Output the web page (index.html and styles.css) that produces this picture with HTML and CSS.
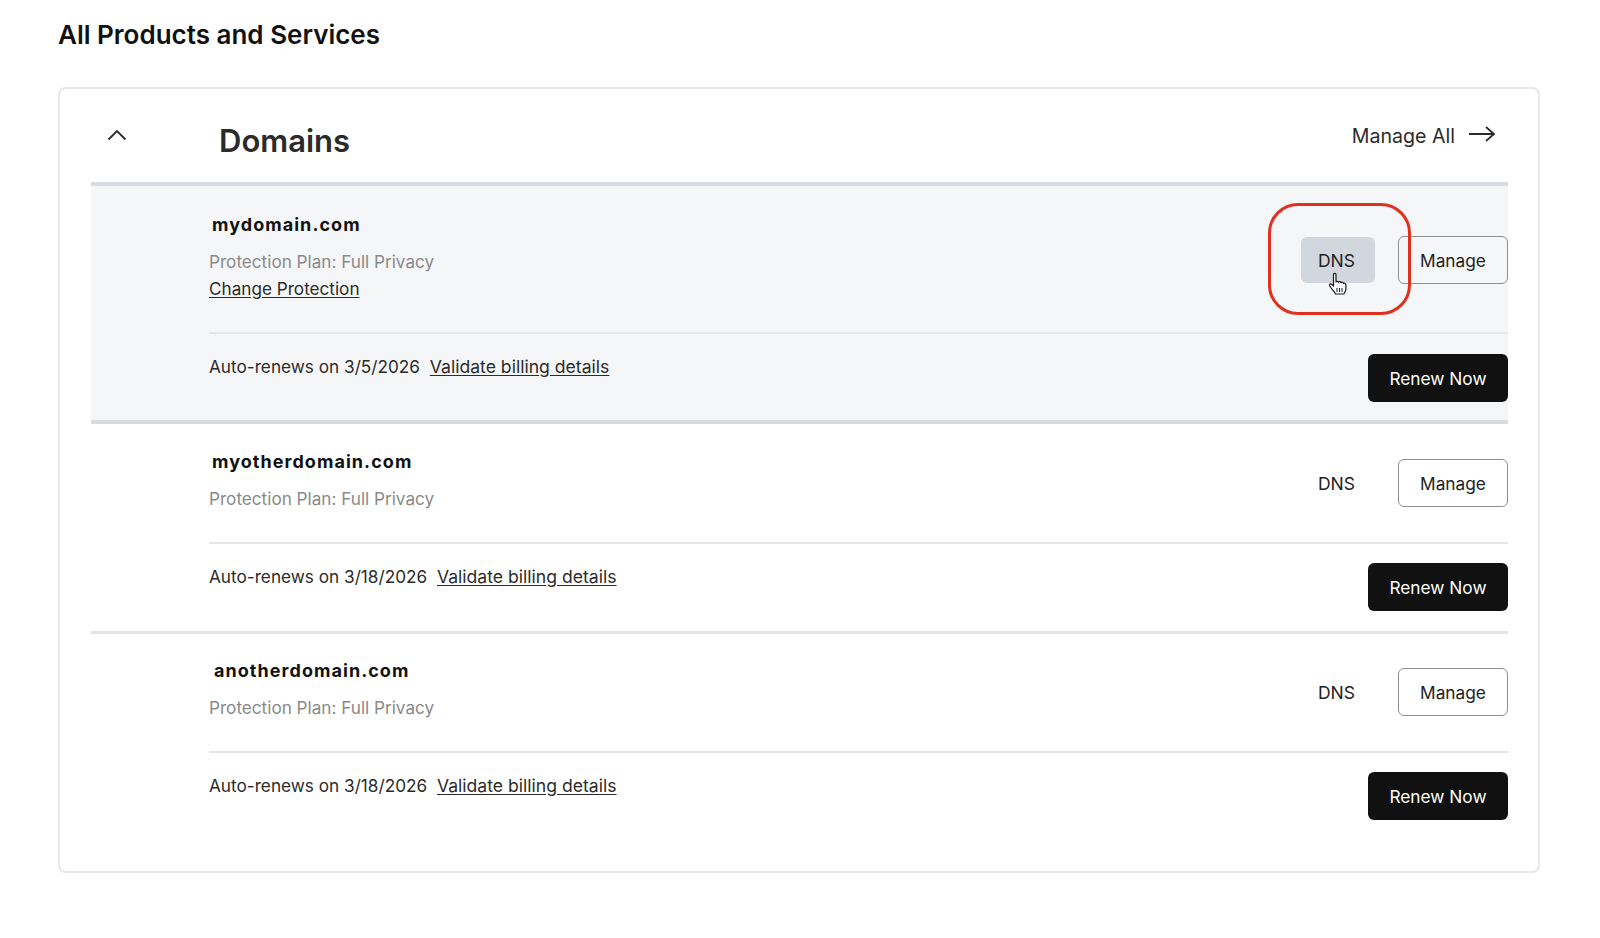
FILE: index.html
```html
<!DOCTYPE html>
<html lang="en">
<head>
<meta charset="utf-8">
<title>All Products and Services</title>
<link rel="stylesheet" href="styles.css">
</head>
<body>
<main class="page">
  <h1 class="title">All Products and Services</h1>
  <section class="card">
    <header class="card-head">
      <svg class="chevron" width="20" height="12" viewBox="0 0 20 12"><path d="M1.5 10.5 10 2l8.500 8.500" fill="none" stroke="#2b2b2b" stroke-width="1.800"/></svg>
      <h2 class="card-title">Domains</h2>
      <a class="manage-all">Manage All
        <svg class="arrow" width="28" height="18" viewBox="0 0 28 18"><path d="M1 9h25M18 2l8 7-8 7" fill="none" stroke="#2b2b2b" stroke-width="1.800"/></svg>
      </a>
    </header>

    <article class="domain domain-active">
      <div class="domain-top domain-top-tall">
        <div class="domain-info">
          <div class="domain-name">mydomain.com</div>
          <div class="plan">Protection Plan: Full Privacy</div>
          <a class="link change">Change Protection</a>
        </div>
        <div class="actions">
          <span class="dns dns-hover">DNS
            <svg class="cursor" width="20" height="24" viewBox="0 0 20 24"><path d="M5.500 2.500c0-1.500 2.500-1.500 2.500 0V10c0-1 2.500-1 2.500.3 0-1 2.500-1 2.500.4 .3-.9 2.500-.6 2.500.8 .2-.7 2.400-.4 2.400 1V17c0 2-1.400 3.500-2 5H7.500C6.500 19.500 4 18 1.800 14c-.9-1.700 1-2.900 2.200-1.500l1.500 1.500z" fill="#fff" stroke="#1a1a1a" stroke-width="1.200" stroke-linejoin="round"/><path d="M9 16v4M11.500 16v4M14 16v4" stroke="#1a1a1a"/></svg>
          </span>
          <a class="btn btn-outline">Manage</a>
        </div>
        <div class="callout"></div>
      </div>
      <div class="domain-bottom">
        <div class="renew-text">Auto-renews on 3/5/2026 <a class="link">Validate billing details</a></div>
        <a class="btn btn-dark">Renew Now</a>
      </div>
    </article>

    <article class="domain">
      <div class="domain-top">
        <div class="domain-info">
          <div class="domain-name">myotherdomain.com</div>
          <div class="plan">Protection Plan: Full Privacy</div>
        </div>
        <div class="actions">
          <span class="dns">DNS</span>
          <a class="btn btn-outline">Manage</a>
        </div>
      </div>
      <div class="domain-bottom">
        <div class="renew-text">Auto-renews on 3/18/2026 <a class="link">Validate billing details</a></div>
        <a class="btn btn-dark">Renew Now</a>
      </div>
    </article>

    <article class="domain domain-last">
      <div class="domain-top">
        <div class="domain-info">
          <div class="domain-name domain-name-shift">anotherdomain.com</div>
          <div class="plan">Protection Plan: Full Privacy</div>
        </div>
        <div class="actions">
          <span class="dns">DNS</span>
          <a class="btn btn-outline">Manage</a>
        </div>
      </div>
      <div class="domain-bottom">
        <div class="renew-text">Auto-renews on 3/18/2026 <a class="link">Validate billing details</a></div>
        <a class="btn btn-dark">Renew Now</a>
      </div>
    </article>
  </section>
</main>
</body>
</html>
```

FILE: styles.css
```css
* { box-sizing: border-box; }
html, body { margin: 0; background: #fff; }
body {
  font-family: "Inter", "Liberation Sans", sans-serif;
  color: #1f1f1f;
  font-size: 18px;
}
.page { padding: 16px 60px 0 58px; }
.title {
  margin: 0;
  font-size: 26px;
  line-height: 38px;
  font-weight: 600;
  color: #111;
}
.card {
  margin-top: 33px;
  width: 1482px;
  height: 786px;
  border: 2px solid #e6e8eb;
  border-radius: 8px;
  padding: 0 30px 0 31px;
  background: #fff;
}
.card-head {
  height: 97px;
  display: flex;
  align-items: flex-start;
  border-bottom: 4px solid #d8dce2;
}
.chevron { margin: 40px 0 0 16px; flex: none; }
.card-title {
  margin: 30px 0 0 92px;
  font-size: 31px;
  line-height: 44px;
  font-weight: 600;
  color: #2b2b2b;
}
.manage-all {
  margin: 32px 12px 0 auto;
  display: flex;
  align-items: center;
  gap: 13px;
  font-size: 19.600px;
  line-height: 30px;
  color: #2b2b2b;
}
.arrow { margin-top: -4px; }
.domain {
  padding-left: 118px;
  border-bottom: 3px solid #e2e4e8;
}
.domain-active {
  background: #f5f6f8;
  border-bottom: 4px solid #d8dce2;
}
.domain-last { border-bottom: 0; }
.domain-top {
  position: relative;
  height: 120px;
  display: flex;
  justify-content: space-between;
  align-items: flex-start;
  padding-top: 26px;
  border-bottom: 2px solid #e4e6e9;
}
.domain-top-tall { height: 148px; padding-top: 27px; }
.domain-last .domain-top { height: 119px; padding-top: 25px; }
.domain-info { min-width: 0; }
.domain-name {
  margin-left: 3px;
  font-size: 18px;
  line-height: 24px;
  font-weight: 700;
  letter-spacing: 1.050px;
  color: #111;
}
.domain-name-shift { margin-left: 5px; }
.plan {
  margin-top: 13px;
  font-size: 17.150px;
  line-height: 24px;
  color: #8a8a8a;
}
.link {
  color: #2b2b2b;
  text-decoration: underline;
  text-underline-offset: 2px;
}
.change { display: block; margin-top: 3px; font-size: 17.150px; line-height: 24px; }
.actions { display: flex; align-items: center; }
.domain-top .actions { margin-top: 9px; }
.domain-top-tall .actions { margin-top: 23px; }
.dns {
  position: relative;
  width: 74px;
  height: 46px;
  margin-right: 23px;
  padding-right: 3px;
  display: flex;
  align-items: center;
  justify-content: center;
  border-radius: 6px;
  font-size: 17.500px;
  color: #222;
}
.dns-hover { background: #d2d7dd; }
.cursor { position: absolute; left: 27px; top: 35px; }
.callout {
  position: absolute;
  left: 1059px;
  top: 17px;
  width: 143px;
  height: 112px;
  border: 3px solid #e0301e;
  border-radius: 30px;
  pointer-events: none;
}
.btn {
  height: 48px;
  display: flex;
  align-items: center;
  justify-content: center;
  border-radius: 6px;
  font-size: 17.300px;
}
.btn-outline {
  width: 110px;
  border: 1.500px solid #8f8f8f;
  background: transparent;
  color: #222;
}
.domain-bottom {
  display: flex;
  justify-content: space-between;
  align-items: flex-start;
  padding-top: 19px;
  height: 87px;
}
.domain-active .domain-bottom { height: 86px; padding-top: 20px; }
.renew-text { font-size: 17.200px; line-height: 24px; margin-top: 2px; color: #2b2b2b; }
.domain-active .renew-text { margin-top: 1px; }
.renew-text .link { margin-left: 5px; font-size: 17.600px; }
.btn-dark { width: 140px; background: #111; color: #fff; }
```
